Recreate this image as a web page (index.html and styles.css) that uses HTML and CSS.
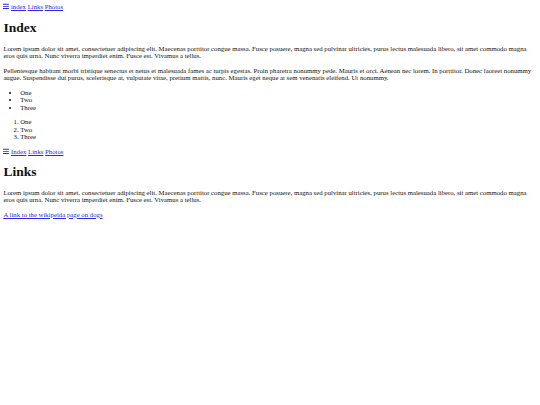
FILE: index.html
```html
<!DOCTYPE html>
<html>
<head>
<meta charset="utf-8">
<title>Index</title>
<link rel="stylesheet" href="styles.css">
</head>
<body class="page">
<section class="view">
  <nav class="nav">
    <svg class="bars" viewBox="0 0 448 512" aria-hidden="true"><path d="M16 132h416c8.8 0 16-7.2 16-16V76c0-8.8-7.2-16-16-16H16C7.2 60 0 67.2 0 76v40c0 8.8 7.2 16 16 16zm0 160h416c8.8 0 16-7.2 16-16v-40c0-8.8-7.2-16-16-16H16c-8.8 0-16 7.2-16 16v40c0 8.8 7.2 16 16 16zm0 160h416c8.8 0 16-7.2 16-16v-40c0-8.8-7.2-16-16-16H16c-8.8 0-16 7.2-16 16v40c0 8.8 7.2 16 16 16z"/></svg>
    <a class="link" href="#index">index</a> <a class="link" href="#links">Links</a> <a class="link" href="#photos">Photos</a>
  </nav>
  <h1 class="title">Index</h1>
  <p class="text">Lorem ipsum dolor sit amet, consectetuer adipiscing elit. Maecenas porttitor congue massa. Fusce posuere, magna sed pulvinar ultricies, purus lectus malesuada libero, sit amet commodo magna eros quis urna. Nunc viverra imperdiet enim. Fusce est. Vivamus a tellus.</p>
  <p class="text">Pellentesque habitant morbi tristique senectus et netus et malesuada fames ac turpis egestas. Proin pharetra nonummy pede. Mauris et orci. Aenean nec lorem. In porttitor. Donec laoreet nonummy augue. Suspendisse dui purus, scelerisque at, vulputate vitae, pretium mattis, nunc. Mauris eget neque at sem venenatis eleifend. Ut nonummy.</p>
  <ul class="list">
    <li>One</li>
    <li>Two</li>
    <li>Three</li>
  </ul>
  <ol class="list">
    <li>One</li>
    <li>Two</li>
    <li>Three</li>
  </ol>
</section>
<section class="view">
  <nav class="nav">
    <svg class="bars" viewBox="0 0 448 512" aria-hidden="true"><path d="M16 132h416c8.8 0 16-7.2 16-16V76c0-8.8-7.2-16-16-16H16C7.2 60 0 67.2 0 76v40c0 8.8 7.2 16 16 16zm0 160h416c8.8 0 16-7.2 16-16v-40c0-8.8-7.2-16-16-16H16c-8.8 0-16 7.2-16 16v40c0 8.8 7.2 16 16 16zm0 160h416c8.8 0 16-7.2 16-16v-40c0-8.8-7.2-16-16-16H16c-8.8 0-16 7.2-16 16v40c0 8.8 7.2 16 16 16z"/></svg>
    <a class="link" href="#index">Index</a> <a class="link" href="#links">Links</a> <a class="link" href="#photos">Photos</a>
  </nav>
  <h1 class="title">Links</h1>
  <p class="text">Lorem ipsum dolor sit amet, consectetuer adipiscing elit. Maecenas porttitor congue massa. Fusce posuere, magna sed pulvinar ultricies, purus lectus malesuada libero, sit amet commodo magna eros quis urna. Nunc viverra imperdiet enim. Fusce est. Vivamus a tellus.</p>
  <p class="text"><a class="link" href="https://en.wikipedia.org/wiki/Dog">A link to the wikipeida page on dogs</a></p>
</section>
</body>
</html>
```
FILE: styles.css
```css
html {
  font-size: 6.75px;
}
.page {
  margin: 3.375px;
  font-family: "Liberation Serif", "Times New Roman", serif;
  font-size: 1rem;
  line-height: 7.6px;
  color: #111;
  background: #fff;
}
.view {
  display: block;
}
.nav {
  display: block;
}
.bars {
  display: inline-block;
  width: 0.875em;
  height: 1em;
  vertical-align: -0.125em;
  fill: #2a2aee;
}
.link {
  color: #2a2aee;
  text-decoration: underline;
}
.title {
  font-size: 2em;
  line-height: 15.6px;
  font-weight: bold;
  margin: 0.67em 0;
}
.text {
  margin: 1em 0;
}
.list {
  margin: 1em 0;
  padding-left: 16.875px;
}
```
